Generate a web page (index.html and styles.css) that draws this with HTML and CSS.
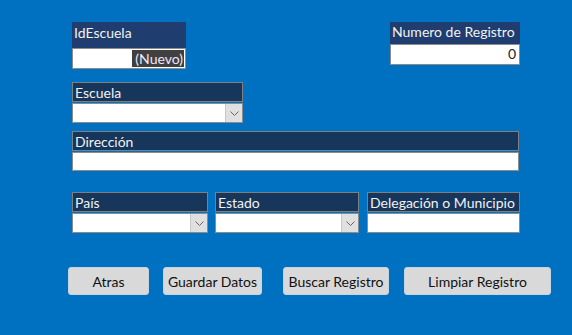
FILE: index.html
```html
<!DOCTYPE html>
<html lang="es">
<head>
  <meta charset="UTF-8">
  <meta name="viewport" content="width=device-width, initial-scale=1.0">
  <title>Escuelas</title>
  <link rel="stylesheet" href="styles.css">
</head>
<body>
  <div class="form">
    <div class="row-top">
      <div class="field field-id">
        <div class="label label-top">IdEscuela</div>
        <div class="box box-id"><span class="nuevo">(Nuevo)</span></div>
      </div>
      <div class="field field-num">
        <div class="label label-top label-short">Numero de Registro</div>
        <div class="box box-num">0</div>
      </div>
    </div>

    <div class="field field-escuela">
      <div class="label">Escuela</div>
      <div class="box combo">
        <span class="combo-text"></span>
        <span class="combo-btn">
          <svg width="9" height="5" viewBox="0 0 9 5"><path d="M0.5 0.5 L4.5 4.5 L8.5 0.5" fill="none" stroke="#666" stroke-width="1"/></svg>
        </span>
      </div>
    </div>

    <div class="field field-dir">
      <div class="label">Dirección</div>
      <div class="box"></div>
    </div>

    <div class="row-loc">
      <div class="field field-pais">
        <div class="label">País</div>
        <div class="box combo">
          <span class="combo-text"></span>
          <span class="combo-btn">
            <svg width="9" height="5" viewBox="0 0 9 5"><path d="M0.5 0.5 L4.5 4.5 L8.5 0.5" fill="none" stroke="#666" stroke-width="1"/></svg>
          </span>
        </div>
      </div>
      <div class="field field-estado">
        <div class="label">Estado</div>
        <div class="box combo">
          <span class="combo-text"></span>
          <span class="combo-btn">
            <svg width="9" height="5" viewBox="0 0 9 5"><path d="M0.5 0.5 L4.5 4.5 L8.5 0.5" fill="none" stroke="#666" stroke-width="1"/></svg>
          </span>
        </div>
      </div>
      <div class="field field-mun">
        <div class="label">Delegación o Municipio</div>
        <div class="box"></div>
      </div>
    </div>

    <div class="buttons">
      <button class="btn btn-atras">Atras</button>
      <button class="btn btn-guardar">Guardar Datos</button>
      <button class="btn btn-buscar">Buscar Registro</button>
      <button class="btn btn-limpiar">Limpiar Registro</button>
    </div>
  </div>
</body>
</html>
```

FILE: styles.css
```css
body {
  margin: 0;
  background-color: #0070c0;
  font-family: Lato, "Liberation Sans", sans-serif;
  font-size: 14px;
  height: 335px;
  overflow: hidden;
}
.form {
  padding: 22px 0 0 72px;
  width: 448px;
}
.field {
  display: flex;
  flex-direction: column;
  gap: 1px;
}
.label {
  box-sizing: border-box;
  height: 20px;
  line-height: 19px;
  padding-left: 2px;
  background-color: #16365c;
  border: 1px solid #7f7f7f;
  color: #f2f2f2;
  white-space: nowrap;
}
.label-top {
  background-color: #1f3d6e;
  border: none;
  height: 26px;
  line-height: 22px;
}
.label-short {
  height: 22px;
  line-height: 20px;
}
.box {
  box-sizing: border-box;
  height: 20px;
  background-color: white;
  border: 1px solid #8c8c8c;
}
.row-top {
  display: flex;
  justify-content: space-between;
}
.row-top .field {
  gap: 0;
}
.field-id {
  width: 114px;
}
.box-id {
  height: 21px;
  display: flex;
  justify-content: flex-end;
  padding: 1px;
}
.nuevo {
  background-color: #404040;
  color: #f0e8ff;
  padding: 0 1px 0 3px;
  line-height: 17px;
}
.field-num {
  width: 130px;
}
.box-num {
  height: 21px;
  text-align: right;
  padding-right: 3px;
  line-height: 18px;
  color: #222;
}
.field-escuela {
  width: 171px;
  margin-top: 13px;
}
.combo {
  display: flex;
  justify-content: space-between;
}
.combo-btn {
  box-sizing: border-box;
  width: 17px;
  height: 18px;
  background-color: #e0e0e0;
  border-left: 1px solid #c8c8c8;
  display: flex;
  align-items: center;
  justify-content: center;
}
.field-dir {
  width: 447px;
  margin-top: 8px;
}
.field-dir .box {
  height: 19px;
}
.row-loc {
  display: flex;
  margin-top: 21px;
}
.field-pais {
  width: 136px;
}
.field-estado {
  width: 144px;
  margin-left: 7px;
}
.field-mun {
  width: 153px;
  margin-left: 8px;
}
.buttons {
  display: flex;
  margin: 34px 0 0 -4px;
}
.btn {
  flex-shrink: 0;
  height: 28px;
  font-family: Lato, "Liberation Sans", sans-serif;
  font-size: 14px;
  color: #111;
  background-color: #d9d9d9;
  border: 1px solid #c6d3e0;
  border-radius: 3px;
  padding: 0;
}
.btn-atras {
  width: 81px;
}
.btn-guardar {
  width: 99px;
  margin-left: 14px;
}
.btn-buscar {
  width: 106px;
  margin-left: 21px;
}
.btn-limpiar {
  width: 147px;
  margin-left: 15px;
}
```
